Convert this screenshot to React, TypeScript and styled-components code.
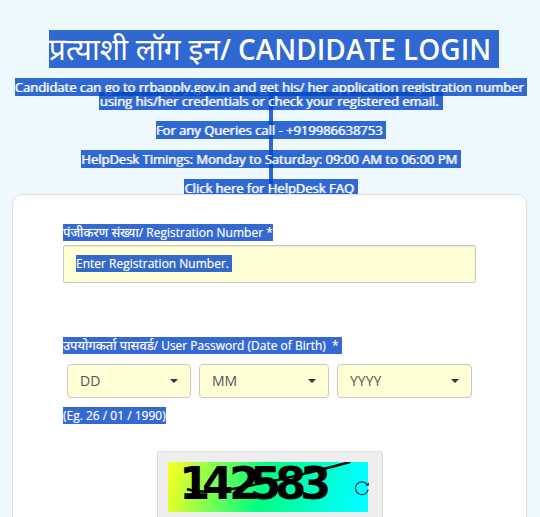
import React from "react";
import styled, { createGlobalStyle, css } from "styled-components";

const selection = "rgba(0, 67, 197, 0.8)";

const GlobalStyle = createGlobalStyle`
  * { box-sizing: border-box; }
  body {
    margin: 0;
    background: #edf8ff;
    color: #fff;
    font-family: "Open Sans", "Noto Sans", "Noto Sans Devanagari", sans-serif;
  }
`;

const Page = styled.main`
  height: 100vh;
  overflow: hidden;
  padding: 30px 12px 0;
`;

const Mark = styled.span<{ $tail?: number }>`
  background: ${selection};
  padding-right: ${(p) => p.$tail ?? 0}px;
`;

const Hindi = styled.span<{ $size: number }>`
  font-size: ${(p) => p.$size}px;
  font-weight: 400;
  line-height: 1;
`;

const Title = styled.h1`
  margin: 0;
  padding-left: 8px;
  font-size: 28px;
  line-height: 38px;
  font-weight: 600;
  text-align: center;
  white-space: nowrap;
`;

const Notices = styled.header`
  position: relative;
  margin-top: 10px;
  padding-left: 2px;
  font-size: 13px;
  line-height: 18px;
  text-align: center;
  white-space: nowrap;
  text-shadow: 1px 0 0 rgba(255, 255, 255, 0.7);

  &::after {
    content: "";
    position: absolute;
    top: 14px;
    bottom: 12px;
    left: 50%;
    width: 4px;
    margin-left: -1px;
    background: ${selection};
    z-index: -1;
  }
`;

const Notice = styled.p<{ $overlap?: boolean }>`
  position: relative;
  margin: ${(p) => (p.$overlap ? "-4px 0 0" : "11px 0 0")};
  &:first-child { margin-top: 0; }
`;

const NoticeLink = styled.a`
  color: inherit;
  text-decoration: none;
`;

const Card = styled.form`
  position: relative;
  margin: -3px 1px 0 0;
  padding: 29px 50px 30px;
  background: #fff;
  border: 1px solid #ddd;
  border-radius: 10px;
`;

const smallText = css`
  font-size: 12px;
  line-height: 17px;
  text-shadow: 0 0 1px rgba(255, 255, 255, 0.5);
`;

const Label = styled.label`
  ${smallText}
  display: block;
  white-space: nowrap;
`;

const fieldLook = css`
  background: #feffd5;
  border: 1px solid #c8c8c8;
`;

const InputBox = styled.div`
  ${fieldLook}
  position: relative;
  margin: 4px 0 54px;
  height: 38px;
  border-radius: 2px;
  box-shadow: inset 0 1px 1px rgba(0, 0, 0, 0.08);
`;

const Hint = styled.span`
  ${smallText}
  position: absolute;
  left: 12px;
  top: 9px;
  pointer-events: none;
`;

const TextInput = styled.input`
  width: 100%;
  height: 100%;
  padding: 0 12px;
  border: 0;
  background: transparent;
  color: #333;
  font: inherit;
  font-size: 12px;
`;

const Selects = styled.div`
  display: grid;
  grid-template-columns: 124fr 130fr 135fr;
  gap: 8px;
  margin: 10px 4px 9px;
`;

const SelectBox = styled.div`
  display: grid;
  align-items: center;
  > * { grid-area: 1 / 1; }
`;

const Select = styled.select`
  ${fieldLook}
  appearance: none;
  width: 100%;
  height: 34px;
  padding: 0 12px 2px;
  border-radius: 4px;
  color: #555;
  font: inherit;
  font-size: 14px;
`;

const Caret = styled.span`
  justify-self: end;
  margin-right: 13px;
  border: 4px solid transparent;
  border-top-color: #333;
  border-bottom: 0;
  pointer-events: none;
`;

const Example = styled.div`
  ${smallText}
`;

const CaptchaPanel = styled.div`
  display: flex;
  align-items: flex-start;
  width: 226px;
  min-height: 100px;
  margin: 27px auto 0 94px;
  padding: 10px;
  background: #eee;
  border: 1px solid #ddd;
  border-radius: 2px;
`;

const Refresh = styled.button`
  flex: none;
  width: 16px;
  height: 16px;
  margin: 18px 0 0 -14px;
  padding: 0;
  border: 0;
  background: none;
  color: #173b45;
  svg { display: block; }
`;

const digits: [string, number][] = [
  ["1", 11], ["4", 34], ["2", 61], ["5", 82], ["8", 107], ["3", 132],
];

const Captcha = () => (
  <svg width="200" height="50" viewBox="0 0 200 50" role="img" aria-label="Captcha 142583">
    <defs>
      <linearGradient id="wash" gradientUnits="userSpaceOnUse" x1="0" y1="0" x2="188" y2="47">
        <stop offset="0" stopColor="#ffff20" />
        <stop offset="0.5" stopColor="#00ff80" />
        <stop offset="1" stopColor="#00ffff" />
      </linearGradient>
    </defs>
    <rect width="200" height="50" fill="url(#wash)" />
    <g fontFamily="DejaVu Sans" fontWeight="700" fontSize="45" fill="#000">
      {digits.map(([d, x]) => (
        <text key={x} x={x} y="37">{d}</text>
      ))}
    </g>
    <path d="M19 27C38 33 60 28 95 21S145 10 182 0" fill="none" stroke="#000" strokeWidth="2.4" />
  </svg>
);

const dateParts = [
  { name: "day", hint: "DD" },
  { name: "month", hint: "MM" },
  { name: "year", hint: "YYYY" },
];

export default function App() {
  return (
    <>
      <GlobalStyle />
      <Page>
        <Title>
          <Mark $tail={8}><Hindi $size={30}>प्रत्याशी लॉग इन</Hindi>/ CANDIDATE LOGIN</Mark>
        </Title>
        <Notices>
          <Notice><Mark $tail={4}>Candidate can go to rrbapply.gov.in and get his/ her application registration number</Mark></Notice>
          <Notice $overlap><Mark $tail={4}>using his/her credentials or check your registered email.</Mark></Notice>
          <Notice><Mark $tail={4}>For any Queries call - +919986638753</Mark></Notice>
          <Notice><Mark $tail={4}>HelpDesk Timings: Monday to Saturday: 09:00 AM to 06:00 PM</Mark></Notice>
          <Notice><NoticeLink href="#faq"><Mark $tail={4}>Click here for HelpDesk FAQ</Mark></NoticeLink></Notice>
        </Notices>
        <Card>
          <Label htmlFor="registration">
            <Mark><Hindi $size={13}>पंजीकरण संख्या</Hindi>/ Registration Number *</Mark>
          </Label>
          <InputBox>
            <TextInput id="registration" />
            <Hint><Mark $tail={3}>Enter Registration Number.</Mark></Hint>
          </InputBox>
          <Label htmlFor="day">
            <Mark $tail={3}><Hindi $size={13}>उपयोगकर्ता पासवर्ड</Hindi>/ User Password (Date of Birth) &nbsp;*</Mark>
          </Label>
          <Selects>
            {dateParts.map((p) => (
              <SelectBox key={p.name}>
                <Select id={p.name} aria-label={p.name}><option>{p.hint}</option></Select>
                <Caret />
              </SelectBox>
            ))}
          </Selects>
          <Example><Mark>(Eg. 26 / 01 / 1990)</Mark></Example>
          <CaptchaPanel>
            <Captcha />
            <Refresh type="button" aria-label="Refresh captcha">
              <svg width="16" height="16" viewBox="0 0 16 16" fill="none" stroke="currentColor" strokeWidth="1.2">
                <path d="M13.2 4.6A6.4 6.4 0 1 0 14.2 9.4" />
                <path d="M14.8 2.2V5.8H11.2Z" fill="currentColor" stroke="none" />
              </svg>
            </Refresh>
          </CaptchaPanel>
        </Card>
      </Page>
    </>
  );
}
